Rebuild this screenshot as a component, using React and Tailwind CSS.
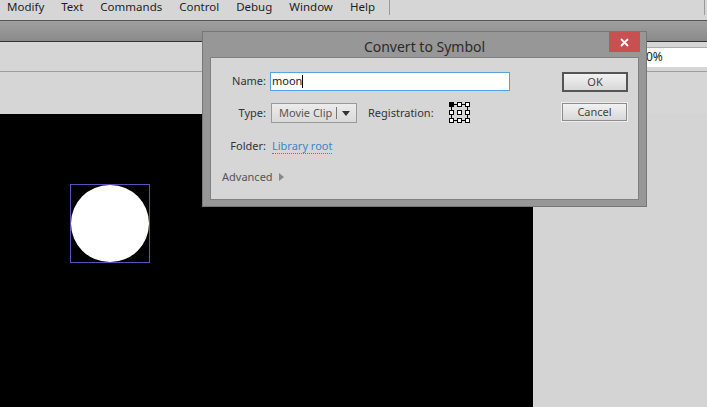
import React from "react";

const menuItems = ["Modify", "Text", "Commands", "Control", "Debug", "Window", "Help"];

function RegistrationGrid() {
  const pts = [0, 8, 16];
  return (
    <svg width="21" height="21" viewBox="0 0 21 21">
      <g stroke="#000" strokeWidth="1" fill="none" shapeRendering="crispEdges">
        <line x1="2" y1="2.5" x2="19" y2="2.5" />
        <line x1="2" y1="18.5" x2="19" y2="18.5" />
        <line x1="2.5" y1="2" x2="2.5" y2="19" />
        <line x1="18.5" y1="2" x2="18.5" y2="19" />
      </g>
      {pts.map((y) =>
        pts.map((x) => (
          <rect
            key={`${x}-${y}`}
            x={x + 0.5}
            y={y + 0.5}
            width="4"
            height="4"
            fill={x === 0 && y === 0 ? "#000" : "#fff"}
            stroke="#000"
            strokeWidth="1"
            shapeRendering="crispEdges"
          />
        ))
      )}
    </svg>
  );
}

function ConvertDialog() {
  return (
    <div className="absolute left-[202px] top-[31px] w-[445px] h-[176px] bg-[#979797] border border-[#777] flex flex-col">
      <div className="relative h-[25px] flex items-center justify-center">
        <span className="text-[14px] text-[#2b2b2b] mt-[4px]">Convert to Symbol</span>
        <div className="absolute right-[6px] top-0 w-[31px] h-[20px] bg-[#c75050] flex items-center justify-center">
          <svg width="9" height="9" viewBox="0 0 9 9">
            <path d="M1 1L8 8M8 1L1 8" stroke="#fff" strokeWidth="1.8" />
          </svg>
        </div>
      </div>
      <div className="mx-[7px] h-[143px] bg-[#d6d6d6] border border-[#808080] flex text-[11px] text-[#333]">
        <div className="flex flex-col pt-[14px] w-[340px]">
          <div className="flex items-center h-[19px]">
            <span className="w-[55px] text-right">Name:</span>
            <div className="ml-[4px] w-[240px] h-[19px] bg-white border border-[#5aa0e6] flex items-center pl-[1px] text-[#222]">
              moon<span className="w-[1px] h-[13px] bg-black" />
            </div>
          </div>
          <div className="flex items-center h-[20px] mt-[12px]">
            <span className="w-[55px] text-right">Type:</span>
            <div className="ml-[5px] w-[86px] h-[20px] border border-[#9a9a9a] bg-gradient-to-b from-[#ececec] to-[#d9d9d9] flex items-center text-[#555]">
              <span className="pl-[7px]">Movie Clip</span>
              <span className="ml-[4px] w-[1px] h-[12px] bg-[#777]" />
              <svg className="ml-[5px]" width="8" height="6" viewBox="0 0 8 6">
                <path d="M0 1h8L4 6z" fill="#333" />
              </svg>
            </div>
            <span className="ml-[11px]">Registration:</span>
            <div className="ml-[15px] mt-[-1px]">
              <RegistrationGrid />
            </div>
          </div>
          <div className="flex items-center h-[20px] mt-[13px]">
            <span className="w-[55px] text-right">Folder:</span>
            <span className="ml-[6px] text-[#3a86c8] border-b border-dotted border-[#3a86c8] leading-[14px]">
              Library root
            </span>
          </div>
          <div className="flex items-center h-[20px] mt-[11px] pl-[11px] text-[#555]">
            <span>Advanced</span>
            <svg className="ml-[6px]" width="5" height="8" viewBox="0 0 5 8">
              <path d="M0 0L5 4L0 8z" fill="#888" />
            </svg>
          </div>
        </div>
        <div className="flex flex-col pt-[14px] pl-[11px]">
          <div className="w-[66px] h-[20px] border-2 border-[#555] bg-gradient-to-b from-[#f2f2f2] to-[#d8d8d8] flex items-center justify-center text-[#444]">
            OK
          </div>
          <div className="mt-[11px] w-[65px] h-[18px] border border-[#8c8c8c] outline outline-1 outline-[#eee] bg-gradient-to-b from-[#f2f2f2] to-[#d8d8d8] flex items-center justify-center text-[#444]">
            Cancel
          </div>
        </div>
      </div>
    </div>
  );
}

export default function App() {
  return (
    <div
      className="relative w-[707px] h-[407px] overflow-hidden bg-[#d6d6d6] flex flex-col"
      style={{ fontFamily: '"Segoe UI", "Noto Sans", sans-serif' }}
    >
      <div className="h-[20px] flex items-start text-[11.5px] leading-[14px] text-[#1e1e1e]">
        <div className="flex items-center pl-[7px] gap-[17px] pt-[0px]">
          {menuItems.map((m) => (
            <span key={m}>{m}</span>
          ))}
        </div>
        <div className="ml-[14px] w-[1px] h-[15px] bg-[#9a9a9a]" />
        <div className="ml-auto mr-[2px] w-[1px] h-[15px] bg-[#9a9a9a]" />
      </div>
      <div className="h-[1px] bg-[#555]" />
      <div className="h-[20px] bg-gradient-to-b from-[#a0a0a0] to-[#8a8a8a]" />
      <div className="h-[1px] bg-[#333]" />
      <div className="h-[29px] flex items-center justify-end">
        <div className="w-[62px] h-[20px] bg-white border-l border-t border-[#aaa] flex items-center text-[12px] text-[#222]">
          0%
        </div>
      </div>
      <div className="h-[1px] bg-[#9e9e9e]" />
      <div className="h-[42px]" />
      <div className="flex-1 flex">
        <div className="w-[533px] bg-black pl-[70px] pt-[70px]">
          <div className="w-[80px] h-[79px] border border-[#5b52b5] flex items-center justify-center">
            <div className="w-[78px] h-[77px] rounded-full bg-white" />
          </div>
        </div>
        <div className="flex-1 bg-[#d4d4d4]" />
      </div>
      <ConvertDialog />
    </div>
  );
}
